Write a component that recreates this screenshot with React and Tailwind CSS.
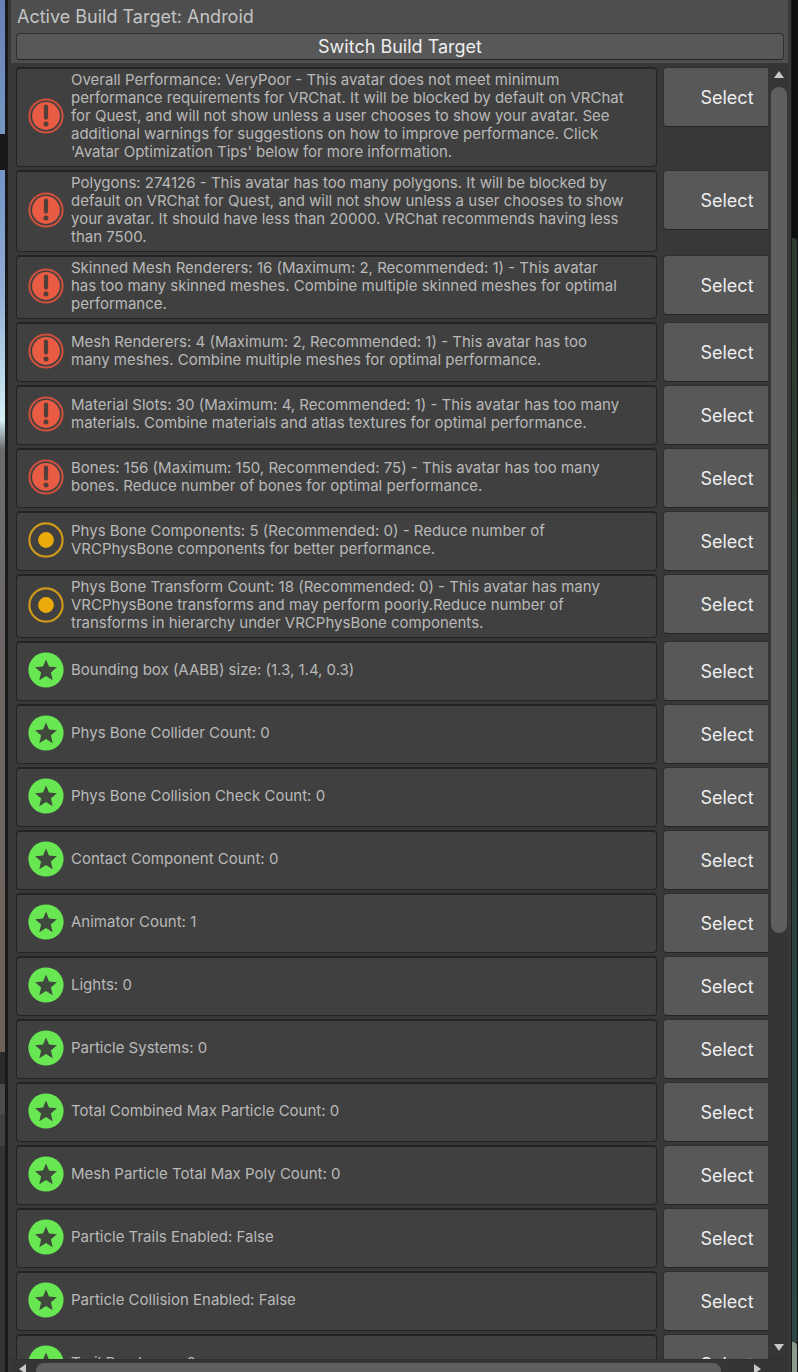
import React from 'react';

const checks = [
  { level: 'error', lines: ['Overall Performance: VeryPoor - This avatar does not meet minimum', 'performance requirements for VRChat. It will be blocked by default on VRChat', 'for Quest, and will not show unless a user chooses to show your avatar. See', 'additional warnings for suggestions on how to improve performance. Click', "'Avatar Optimization Tips' below for more information."] },
  { level: 'error', lines: ['Polygons: 274126 - This avatar has too many polygons. It will be blocked by', 'default on VRChat for Quest, and will not show unless a user chooses to show', 'your avatar. It should have less than 20000. VRChat recommends having less', 'than 7500.'] },
  { level: 'error', lines: ['Skinned Mesh Renderers: 16 (Maximum: 2, Recommended: 1) - This avatar', 'has too many skinned meshes. Combine multiple skinned meshes for optimal', 'performance.'] },
  { level: 'error', lines: ['Mesh Renderers: 4 (Maximum: 2, Recommended: 1) - This avatar has too', 'many meshes. Combine multiple meshes for optimal performance.'] },
  { level: 'error', lines: ['Material Slots: 30 (Maximum: 4, Recommended: 1) - This avatar has too many', 'materials. Combine materials and atlas textures for optimal performance.'] },
  { level: 'error', lines: ['Bones: 156 (Maximum: 150, Recommended: 75) - This avatar has too many', 'bones. Reduce number of bones for optimal performance.'] },
  { level: 'warning', lines: ['Phys Bone Components: 5 (Recommended: 0) - Reduce number of', 'VRCPhysBone components for better performance.'] },
  { level: 'warning', lines: ['Phys Bone Transform Count: 18 (Recommended: 0) - This avatar has many', 'VRCPhysBone transforms and may perform poorly.Reduce number of', 'transforms in hierarchy under VRCPhysBone components.'] },
  { level: 'good', lines: ['Bounding box (AABB) size: (1.3, 1.4, 0.3)'] },
  { level: 'good', lines: ['Phys Bone Collider Count: 0'] },
  { level: 'good', lines: ['Phys Bone Collision Check Count: 0'] },
  { level: 'good', lines: ['Contact Component Count: 0'] },
  { level: 'good', lines: ['Animator Count: 1'] },
  { level: 'good', lines: ['Lights: 0'] },
  { level: 'good', lines: ['Particle Systems: 0'] },
  { level: 'good', lines: ['Total Combined Max Particle Count: 0'] },
  { level: 'good', lines: ['Mesh Particle Total Max Poly Count: 0'] },
  { level: 'good', lines: ['Particle Trails Enabled: False'] },
  { level: 'good', lines: ['Particle Collision Enabled: False'] },
  { level: 'good', lines: ['Trail Renderers: 0'] },
];

// share of the list that fits in the window
const SCROLL_Y = 847 / 1252;
const SCROLL_X = 684 / 714;

const LevelIcon = ({ level }) => {
  if (level === 'error') {
    return (
      <svg viewBox="0 0 36 36" className="size-9 shrink-0" aria-hidden="true">
        <circle cx="18" cy="18" r="16.6" fill="none" stroke="#cf503d" strokeWidth="2" />
        <circle cx="18" cy="18" r="13.9" fill="#e95b43" />
        <path d="M18 8.6v11" stroke="#533f3a" strokeWidth="4.2" strokeLinecap="round" />
        <circle cx="18" cy="26" r="2.5" fill="#533f3a" />
      </svg>
    );
  }
  if (level === 'warning') {
    return (
      <svg viewBox="0 0 36 36" className="size-9 shrink-0" aria-hidden="true">
        <circle cx="18" cy="18" r="16.6" fill="none" stroke="#cf9a1a" strokeWidth="2.2" />
        <circle cx="18" cy="18" r="7.9" fill="#eaaa0a" />
      </svg>
    );
  }
  return (
    <svg viewBox="0 0 36 36" className="size-9 shrink-0" aria-hidden="true">
      <circle cx="18" cy="18" r="17.6" fill="#68e752" />
      <path d="M18 7.4l3 7.2 7.9.7-6 5.2 1.8 7.7L18 24.1l-6.7 4.1 1.8-7.7-6-5.2 7.9-.7z" fill="#3f4a3d" />
    </svg>
  );
};

const CheckRow = ({ level, lines }) => (
  <li className="flex items-start gap-[6px]">
    <div className="flex min-h-15 min-w-0 flex-1 items-center gap-[7px] rounded-[4px] border border-t-2 border-[#242424] bg-[#404040] pt-[2px] pb-[5px] pl-[11px]">
      <LevelIcon level={level} />
      <p className="text-[15px] leading-[18px] whitespace-nowrap text-[#b9b9b9]">
        {lines.map((line) => (
          <span key={line} className="block">{line}</span>
        ))}
      </p>
    </div>
    <button type="button" className="h-15 w-32 shrink-0 rounded-[4px] border border-[#303030] border-b-[#242424] bg-[#585858] text-[18px] text-[#eeeeee]">
      Select
    </button>
  </li>
);

const Arrow = ({ d }) => (
  <svg viewBox="0 0 12 12" className="size-3 shrink-0" aria-hidden="true">
    <path d={d} fill="#c8c8c8" />
  </svg>
);

const App = () => (
  <div className="flex h-screen overflow-hidden bg-[#191919] font-['Inter',sans-serif] [font-optical-sizing:none]">
    {/* Scene view showing past the left edge */}
    <div className="flex w-[5px] shrink-0 flex-col">
      <div className="h-[134px] bg-linear-to-b from-[#6581b4] to-[#7796c4]" />
      <div className="h-9 bg-[#18191b]" />
      <div className="h-[250px] bg-linear-to-b from-[#7593c6] via-[#91afd5] to-[#d5f0f5]" />
      <div className="h-[30px] bg-linear-to-b from-[#d5f0f5] to-[#6b6a6d]" />
      <div className="h-[602px] bg-linear-to-b from-[#6b6a6d] to-[#6f6257]" />
      <div className="h-8 bg-[#2a2a2a]" />
      <div className="h-[30px] bg-[#4c4c4c]" />
      <div className="h-8 bg-[#404040]" />
      <div className="flex-1 bg-[#333333]" />
    </div>

    <main className="ml-[3px] flex min-w-0 flex-1 flex-col bg-[#383838] px-[3px]">
      <header className="flex h-[63px] shrink-0 flex-col bg-[#4e4e4e] pr-1 pl-[5px]">
        <h1 className="h-[33px] px-px pt-[5px] text-[18px] leading-6 text-[#c4c4c4]">Active Build Target: Android</h1>
        <button type="button" className="h-[27px] w-full rounded-[4px] border border-[#303030] border-b-[#242424] bg-[#585858] text-[18px] leading-6 text-[#eeeeee]">
          Switch Build Target
        </button>
      </header>

      <div className="flex min-h-0 flex-1">
        <div className="min-w-0 flex-1 overflow-hidden pt-1 pl-[5px]">
          <ul className="-mr-[23px] flex flex-col gap-[3px]">
            {checks.map((check) => (
              <CheckRow key={check.lines[0]} {...check} />
            ))}
          </ul>
        </div>
        <div className="flex w-5 shrink-0 flex-col items-center bg-[#353535] py-[6px] pl-[2px]">
          <Arrow d="M6 2l5 7H1z" />
          <div className="mt-[6px] mb-[3px] flex w-full flex-1 justify-center">
            <div className="w-4 rounded-full bg-[#5f5f5f]" style={{ height: `${SCROLL_Y * 100}%` }} />
          </div>
          <Arrow d="M6 10l5-7H1z" />
        </div>
      </div>

      <div className="flex h-[13px] shrink-0 items-start overflow-hidden border-t border-[#303030] bg-[#353535] pt-[3px] pr-[25px] pl-[6px]">
        <Arrow d="M2 6l7-5v10z" />
        <div className="ml-[7px] flex-1">
          <div className="h-4 rounded-full bg-[#5f5f5f]" style={{ width: `${SCROLL_X * 100}%` }} />
        </div>
        <Arrow d="M10 6L3 1v10z" />
      </div>
    </main>

    {/* Game view on the other side */}
    <div className="ml-px flex w-[6px] shrink-0 flex-col border-r border-[#101212]">
      <div className="h-[238px] bg-[#0c0e10]" />
      <div className="flex-1 rounded-tr-[4px] bg-linear-to-b from-[#2f3b2e] via-[#2a403c] to-[#2c4646]" />
      <div className="h-[30px] rounded-tr-[4px] bg-[#8f9a8e]" />
    </div>
  </div>
);

export default App;
